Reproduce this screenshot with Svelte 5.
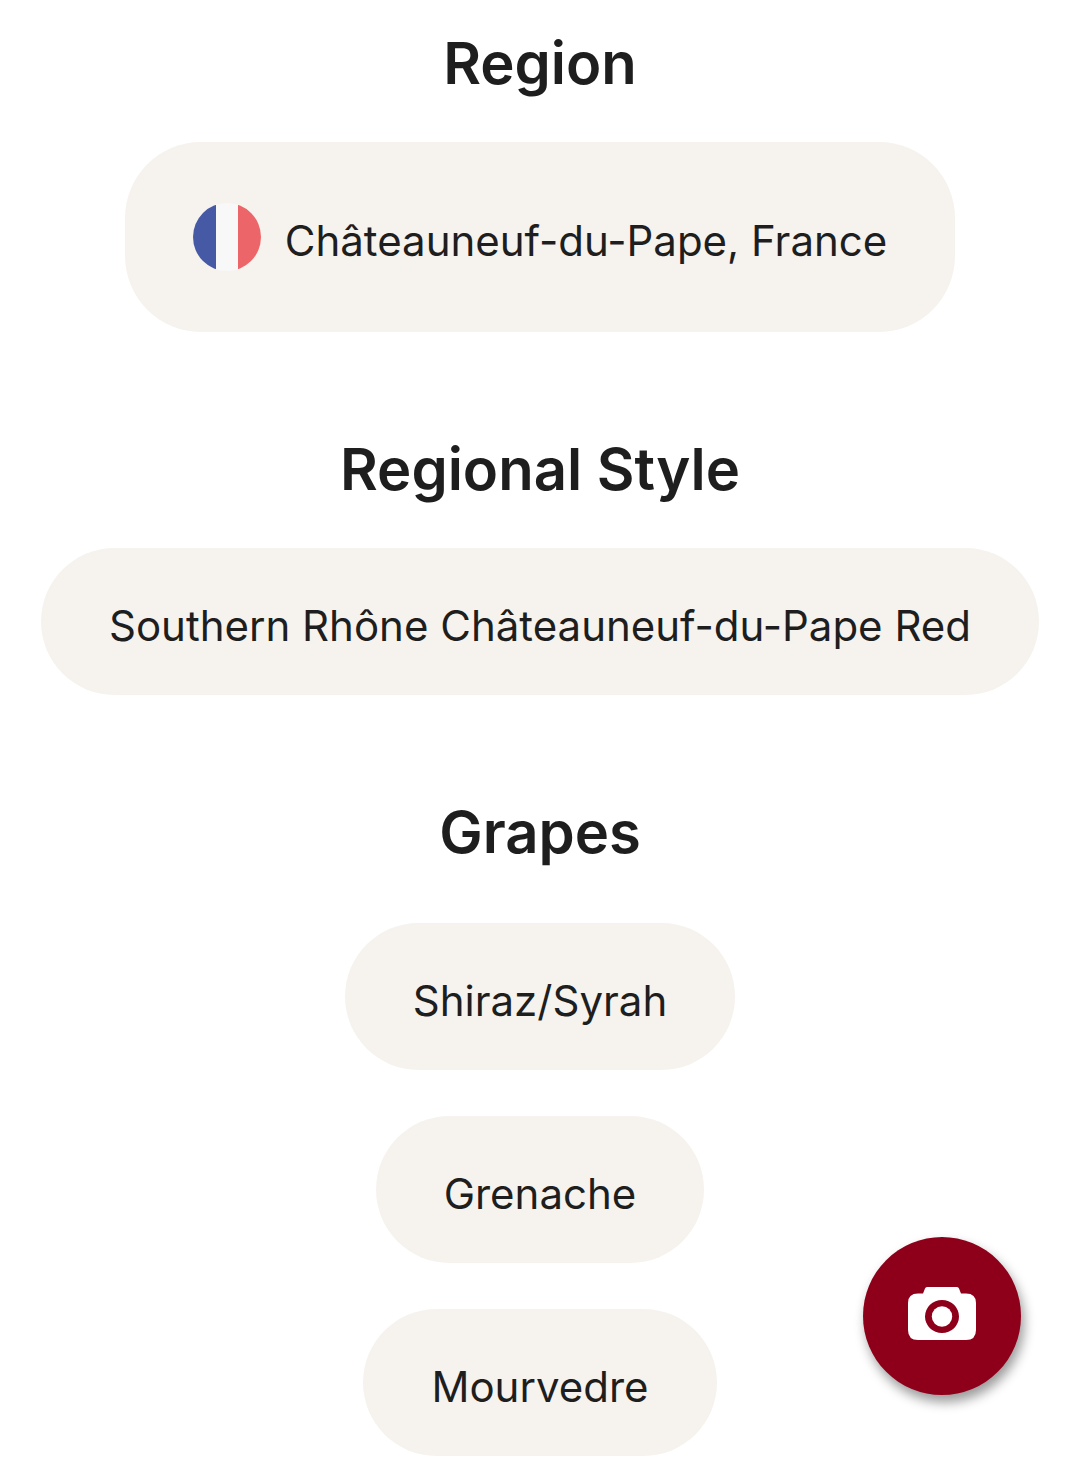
<script lang="ts">
	const grapes = ['Shiraz/Syrah', 'Grenache', 'Mourvedre'];
</script>

<svelte:head>
	<title>Châteauneuf-du-Pape Red</title>
</svelte:head>

<main>
	<section>
		<h2>Region</h2>
		<a class="chip tall" href="/region">
			<svg class="flag" viewBox="0 0 68 68" aria-hidden="true">
				<defs>
					<clipPath id="flag-circle">
						<circle cx="34" cy="34" r="34" />
					</clipPath>
				</defs>
				<g clip-path="url(#flag-circle)">
					<rect width="68" height="68" fill="#f8f8f8" />
					<rect width="23" height="68" fill="#4559a5" />
					<rect x="45" width="23" height="68" fill="#ec6669" />
				</g>
			</svg>
			<span>Châteauneuf-du-Pape, France</span>
		</a>
	</section>

	<section>
		<h2>Regional Style</h2>
		<a class="chip" href="/style"><span>Southern Rhône Châteauneuf-du-Pape Red</span></a>
	</section>

	<section class="grapes">
		<h2>Grapes</h2>
		<ul>
			{#each grapes as grape (grape)}
				<li>
					<a class="chip" href={`/grapes/${grape.toLowerCase()}`}><span>{grape}</span></a>
				</li>
			{/each}
		</ul>
	</section>
</main>

<button class="scan" type="button" aria-label="Scan a label">
	<svg viewBox="0 0 68 53" aria-hidden="true">
		<path
			fill="#fff"
			fill-rule="evenodd"
			d="M19 0H49Q50.500 0 51 1.500L53 6.500H58Q68 6.500 68 16V43Q68 53 58 53H10Q0 53 0 43V16Q0 6.500 10 6.500H15L17 1.500Q17.500 0 19 0ZM34 13A17 16.500 0 1 0 34 46A17 16.500 0 1 0 34 13Z"
		/>
		<circle cx="34" cy="29.500" r="10.200" fill="#fff" />
	</svg>
</button>

<style>
	:global(body) {
		background: #fff;
		color: #1e1e1e;
		font-family: Inter, 'Liberation Sans', sans-serif;
	}

	main {
		padding: 27px 32px 18px;
	}

	section {
		display: flex;
		flex-direction: column;
		align-items: center;
		margin-bottom: 101px;
	}

	h2 {
		margin: 0 0 43px;
		font-size: 58px;
		font-weight: 600;
		line-height: 72px;
	}

	.chip {
		display: flex;
		align-items: center;
		gap: 24px;
		box-sizing: border-box;
		min-height: 147px;
		padding: 0 68px;
		border-radius: 76px;
		background: #f6f3ef;
		color: inherit;
		font-size: 42px;
		line-height: 56px;
		text-decoration: none;
	}

	.chip span {
		padding-top: 8px;
	}

	.tall {
		min-height: 190px;
	}

	.flag {
		flex: none;
		width: 68px;
		height: 68px;
	}

	.grapes {
		margin-bottom: 0;
	}

	ul {
		display: flex;
		flex-direction: column;
		align-items: center;
		gap: 46px;
		margin: 12px 0 0;
		padding: 0;
		list-style: none;
	}

	.scan {
		position: fixed;
		right: 59px;
		bottom: 79px;
		display: grid;
		place-items: center;
		width: 158px;
		height: 158px;
		padding: 0 0 6px;
		border: 0;
		border-radius: 50%;
		background: #8e001a;
		box-shadow: 3px 7px 12px rgb(0 0 0 / 40%);
	}

	.scan svg {
		width: 68px;
		height: 53px;
	}
</style>
